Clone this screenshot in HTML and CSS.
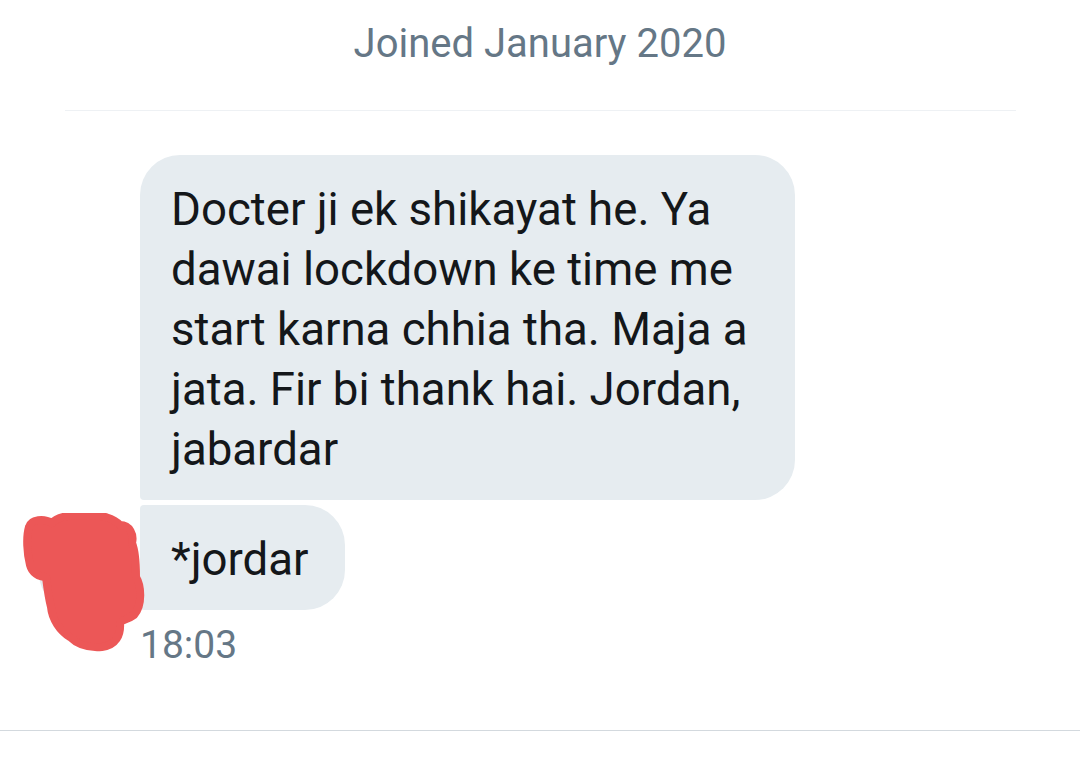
FILE: index.html
```html
<!DOCTYPE html>
<html lang="en">
<head>
<meta charset="utf-8">
<title>Conversation</title>
<link rel="stylesheet" href="styles.css">
</head>
<body>
<div class="page">
  <header class="joined">Joined January 2020</header>
  <div class="divider"></div>
  <section class="thread">
    <div class="group">
      <div class="avatar-slot">
        <div class="avatar"></div>
        <svg class="redact" width="124" height="140" viewBox="0 0 124 140" aria-hidden="true">
          <path fill="#ec5757" stroke="#ec5757" stroke-width="8" stroke-linejoin="round"
            d="M7 14 C9 6 22 5 30 10 C36 3 52 1 66 3 C80 1 92 6 98 12 C108 12 112 22 110 30 C114 40 114 54 114 64 C119 72 121 92 112 102 C104 108 100 106 98 110 C99 122 94 132 80 134 C68 135 56 132 48 124 C38 118 30 106 29 94 C26 82 25 72 24 64 C17 64 10 60 8 52 C5 40 4 24 7 14 Z"/>
        </svg>
      </div>
      <div class="bubbles">
        <div class="bubble bubble-first">Docter ji ek shikayat he. Ya<br>dawai lockdown ke time me<br>start karna chhia tha. Maja a<br>jata. Fir bi thank hai. Jordan,<br>jabardar</div>
        <div class="bubble bubble-last">*jordar</div>
      </div>
    </div>
    <div class="time">18:03</div>
  </section>
  <div class="bottom-line"></div>
</div>
</body>
</html>
```
FILE: styles.css
```css
html, body {
  margin: 0;
  padding: 0;
  background: #ffffff;
}

.page {
  width: 1080px;
  height: 762px;
  overflow: hidden;
  font-family: Roboto, "Noto Sans", "Liberation Sans", sans-serif;
  display: flex;
  flex-direction: column;
}

.joined {
  padding-top: 20px;
  font-size: 40px;
  line-height: 48px;
  text-align: center;
  color: #657786;
}

.divider {
  margin: 42px 64px 0 65px;
  height: 1px;
  background: #eef1f4;
}

.thread {
  margin-top: 44px;
  display: flex;
  flex-direction: column;
}

.group {
  display: flex;
  align-items: flex-end;
}

.avatar-slot {
  position: relative;
  width: 140px;
  height: 105px;
  flex: none;
}

.avatar {
  position: absolute;
  left: 38px;
  top: 13px;
  width: 100px;
  height: 100px;
  border-radius: 50%;
  background: #e4e9ed;
}

.avatar::before {
  content: "";
  position: absolute;
  left: 5px;
  top: 58px;
  width: 4px;
  height: 9px;
  border-radius: 2px;
  background: #3b4248;
}

.redact {
  position: absolute;
  left: 22px;
  top: 8px;
}

.bubbles {
  display: flex;
  flex-direction: column;
  gap: 5px;
}

.bubble {
  background: #e6ecf0;
  color: #14171a;
  font-size: 45.6px;
  line-height: 60px;
  padding: 25px 36px 20px 31px;
  white-space: nowrap;
}

.bubble-first {
  width: 588px;
  border-radius: 40px 40px 40px 4px;
}

.bubble-last {
  align-self: flex-start;
  border-radius: 4px 40px 40px 4px;
}

.time {
  margin-top: 13px;
  padding-left: 140px;
  font-size: 39px;
  line-height: 44px;
  color: #657786;
}

.bottom-line {
  margin-top: 63px;
  height: 1px;
  background: #d3d9de;
}
```
